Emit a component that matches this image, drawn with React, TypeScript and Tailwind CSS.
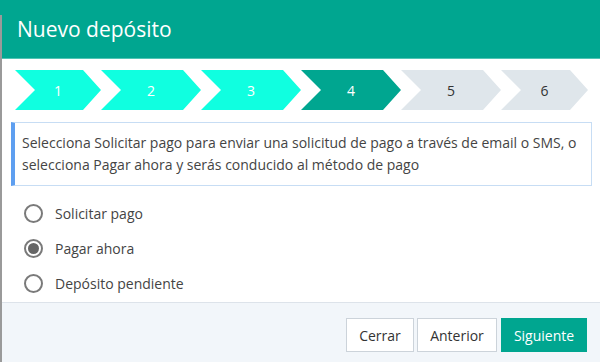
import React from "react";

const steps = [
  { n: "1", w: 86, bg: "bg-[#10ffe0]", text: "text-white" },
  { n: "2", w: 100, bg: "bg-[#10ffe0]", text: "text-white" },
  { n: "3", w: 100, bg: "bg-[#10ffe0]", text: "text-white" },
  { n: "4", w: 100, bg: "bg-[#00a690]", text: "text-white" },
  { n: "5", w: 100, bg: "bg-[#dfe6eb]", text: "text-[#333]" },
  { n: "6", w: 87, bg: "bg-[#dfe6eb]", text: "text-[#333]" },
];

function Radio({ checked, label }: { checked?: boolean; label: string }) {
  return (
    <div className="flex items-center h-[35px]">
      <div className="w-[19px] h-[19px] rounded-full border-2 border-[#7a7a7a] flex items-center justify-center bg-white ml-[22px]">
        {checked && <div className="w-[11px] h-[11px] rounded-full bg-[#666]" />}
      </div>
      <span className="ml-[12px] text-[14px] text-[#444]">{label}</span>
    </div>
  );
}

export default function App() {
  return (
    <div
      className="w-[600px] h-[362px] flex bg-white overflow-hidden"
      style={{ fontFamily: '"Open Sans", "Noto Sans", sans-serif' }}
    >
      <div className="w-[2px] flex flex-col">
        <div className="h-[15px] bg-[#00a690]" />
        <div className="flex-1 bg-[#9a9a9a]" />
      </div>
      <div className="flex-1 flex flex-col">
        <div className="h-[59px] bg-[#00a690] flex items-center pl-[15px] border-b border-[#4fc4b4]">
          <span className="text-[21px] text-white leading-none">Nuevo depósito</span>
        </div>
        <div className="flex mt-[11px] ml-[13px]">
          {steps.map((s) => (
            <div
              key={s.n}
              className={`h-[40px] flex items-center justify-center text-[14px] ${s.bg} ${s.text}`}
              style={{
                width: s.w,
                clipPath: `polygon(0 0, ${s.w - 18}px 0, ${s.w}px 20px, ${s.w - 18}px 40px, 0 40px, 20px 20px)`,
              }}
            >
              {s.n}
            </div>
          ))}
        </div>
        <div className="mt-[12px] ml-[9px] mr-[8px] border border-[#c7ddf4] border-l-[4px] border-l-[#5e9ff0] pl-[7px] py-[9px] text-[14px] leading-[22px] text-[#444]">
          Selecciona Solicitar pago para enviar una solicitud de pago a través de email o SMS, o
          selecciona Pagar ahora y serás conducido al método de pago
        </div>
        <div className="mt-[10px] flex flex-col">
          <Radio label="Solicitar pago" />
          <Radio checked label="Pagar ahora" />
          <Radio label="Depósito pendiente" />
        </div>
        <div className="flex-1 mt-[1px] bg-[#f2f6fa] border-t border-[#dde3ea] flex justify-end items-start pt-[15px] pr-[13px]">
          <button className="h-[34px] w-[68px] bg-white border border-[#ccd3da] text-[14px] text-[#333]">
            Cerrar
          </button>
          <button className="ml-[3px] h-[34px] w-[80px] bg-white border border-[#ccd3da] text-[14px] text-[#333]">
            Anterior
          </button>
          <button className="ml-[4px] h-[34px] w-[86px] bg-[#00a690] border border-[#00a690] text-[14px] text-white">
            Siguiente
          </button>
        </div>
      </div>
    </div>
  );
}
